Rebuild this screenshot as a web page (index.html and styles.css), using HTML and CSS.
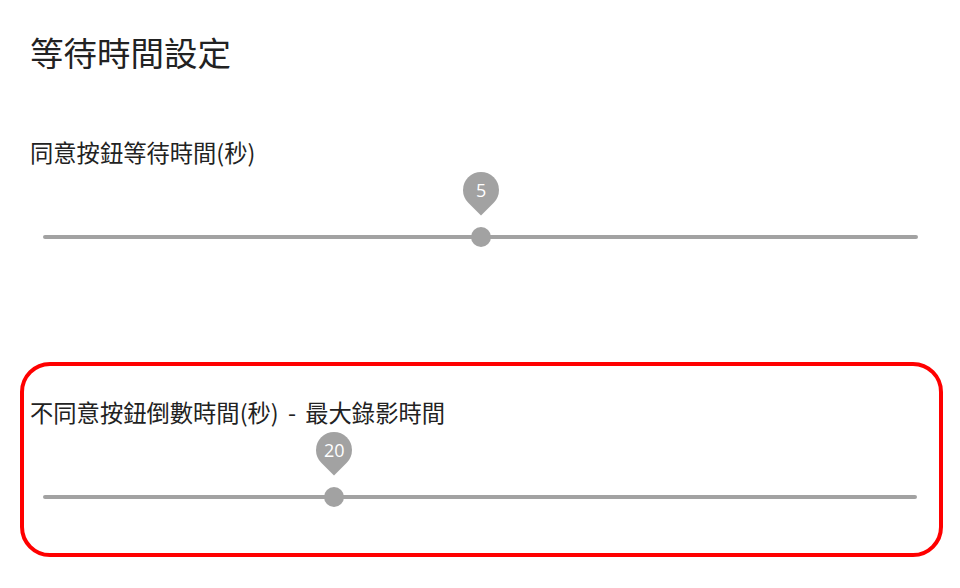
FILE: index.html
```html
<!DOCTYPE html>
<html lang="zh-Hant">
<head>
<meta charset="utf-8">
<title>等待時間設定</title>
<link rel="stylesheet" href="styles.css">
</head>
<body>
<main class="page">
  <h1 class="title">等待時間設定</h1>

  <section class="setting">
    <div class="label">同意按鈕等待時間(秒)</div>
    <div class="slider">
      <div class="track"></div>
      <div class="thumb" style="left: 50%">
        <span class="value-label"><span class="value-text">5</span></span>
      </div>
    </div>
  </section>

  <section class="setting setting--highlight">
    <div class="label label--spaced">不同意按鈕倒數時間(秒) - 最大錄影時間</div>
    <div class="slider">
      <div class="track"></div>
      <div class="thumb" style="left: 33.333%">
        <span class="value-label"><span class="value-text">20</span></span>
      </div>
    </div>
  </section>
</main>
</body>
</html>
```

FILE: styles.css
```css
html, body {
  margin: 0;
  padding: 0;
  background: #ffffff;
}

body {
  font-family: "Noto Sans CJK TC", "Noto Sans", sans-serif;
  color: #222222;
}

.page {
  padding: 32px 17px 0 20px;
}

.title {
  margin: 0 0 0 10px;
  font-size: 33.5px;
  font-weight: 400;
  line-height: 40px;
}

.setting {
  margin-top: 65px;
}

.label {
  margin-left: 10px;
  font-size: 23.3px;
  line-height: 30px;
  white-space: nowrap;
}

.label--spaced {
  word-spacing: 4px;
}

.slider {
  position: relative;
  margin: 68px 25px 0 23px;
  height: 4px;
}

.track {
  height: 4px;
  background: #a2a2a2;
  border-radius: 2px;
}

.thumb {
  position: absolute;
  top: -8px;
  width: 20px;
  height: 20px;
  margin-left: -10px;
  border-radius: 50%;
  background: #a2a2a2;
}

.value-label {
  position: absolute;
  left: -8px;
  top: -55px;
  width: 36px;
  height: 36px;
  border-radius: 50% 50% 50% 0;
  background: #a2a2a2;
  transform: rotate(-45deg);
  display: flex;
  align-items: center;
  justify-content: center;
}

.value-text {
  transform: rotate(45deg);
  color: #ffffff;
  font-family: "Open Sans", "Noto Sans", sans-serif;
  font-size: 18px;
  line-height: 1;
}

.setting--highlight {
  margin-top: 123px;
  border: 4px solid #ff0000;
  border-radius: 30px;
  padding: 31px 0 54px 6px;
}

.setting--highlight .label {
  margin-left: 0;
}

.setting--highlight .slider {
  margin: 68px 22px 0 13px;
}
```
